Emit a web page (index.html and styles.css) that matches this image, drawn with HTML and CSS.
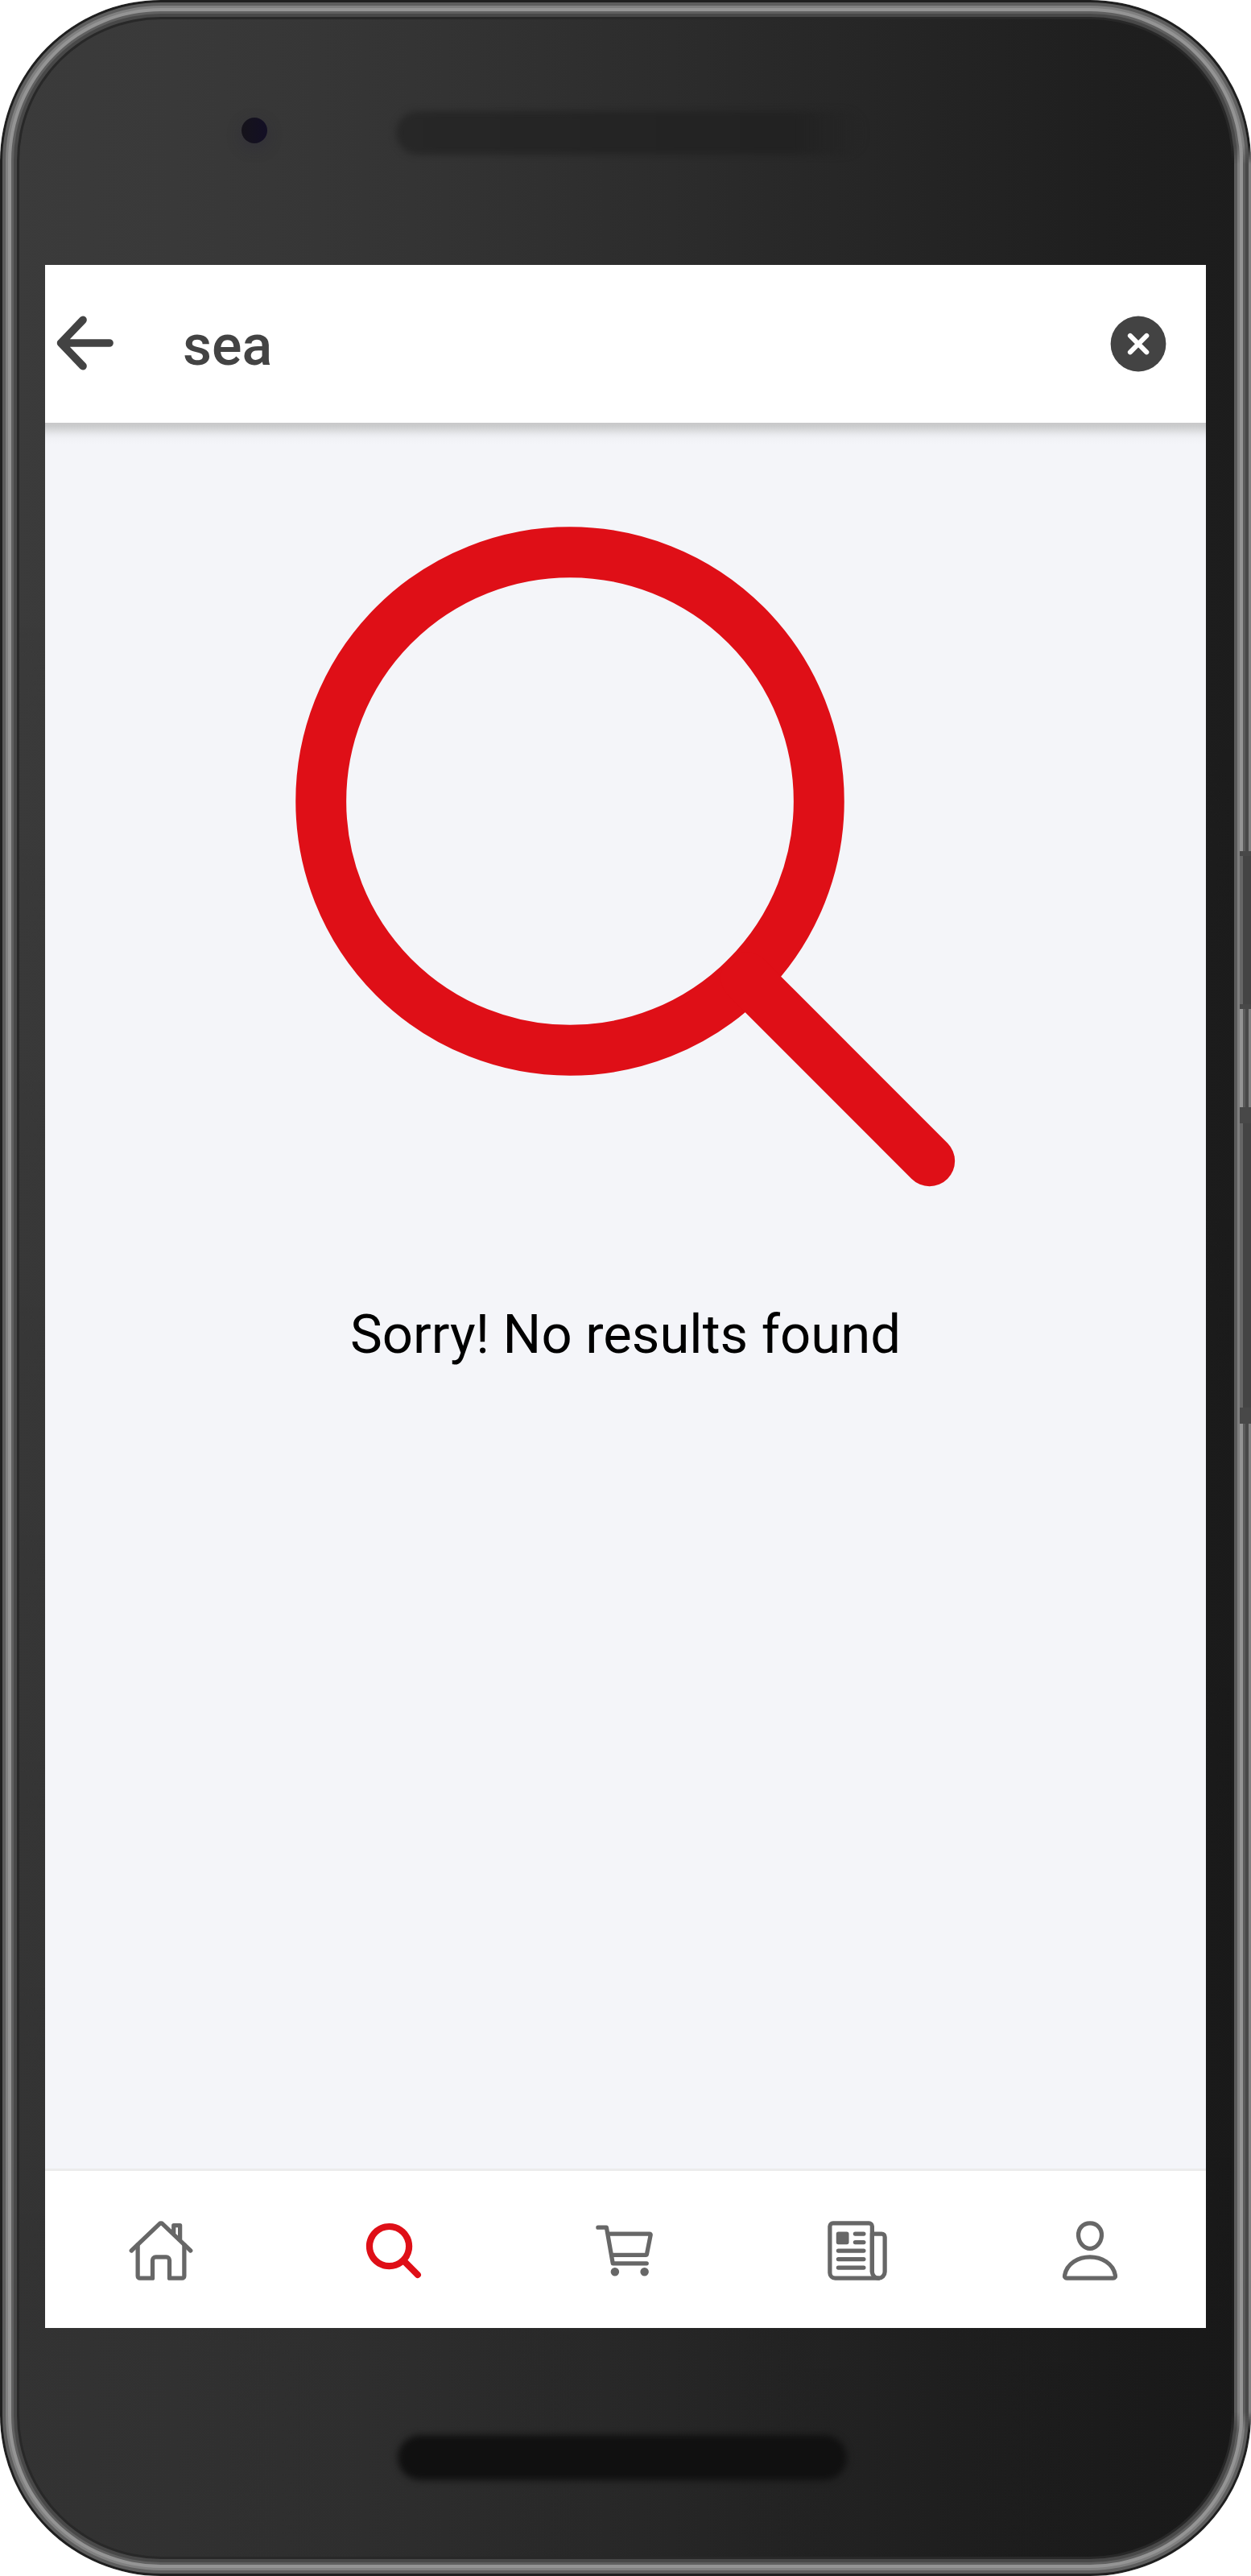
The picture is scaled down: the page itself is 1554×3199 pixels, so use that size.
FILE: index.html
```html
<!DOCTYPE html>
<html lang="en">
<head>
<meta charset="utf-8">
<title>Search</title>
<link rel="stylesheet" href="styles.css">
</head>
<body>
<div class="phone">
  <div class="bezel-top">
    <span class="camera"></span>
    <span class="speaker"></span>
  </div>
  <main class="screen">
    <header class="search-bar">
      <svg class="back" viewBox="0 0 72 68"><path d="M33 5.3 5.6 34 33 62.700M5.600 34H66"/></svg>
      <span class="query">sea</span>
      <svg class="clear" viewBox="0 0 70 70"><circle cx="35" cy="35" r="34.400"/><path d="M24.900 24.900 45.300 45.300M45.300 24.900 24.900 45.300"/></svg>
    </header>
    <section class="results">
      <svg class="empty-icon" viewBox="0 0 820 820"><circle cx="341" cy="341" r="309.300"/><path d="M559.700 559.700 787.700 787.700"/></svg>
      <p class="empty-text">Sorry! No results found</p>
    </section>
    <nav class="tabs">
      <a class="tab"><svg viewBox="0 0 512 512"><path d="M80 212v236a16 16 0 0016 16h96V328a24 24 0 0124-24h80a24 24 0 0124 24v136h96a16 16 0 0016-16V212"/><path d="M480 256L266.890 52c-5-5.280-16.690-5.340-21.780 0L32 256M400 179V64h-48v69"/></svg></a>
      <a class="tab active"><svg viewBox="0 0 512 512"><path d="M456.690 421.390L362.600 327.300a173.810 173.810 0 0034.840-104.580C397.440 126.380 319.060 48 222.720 48S48 126.380 48 222.720s78.380 174.720 174.720 174.720A173.810 173.810 0 00327.300 362.600l94.090 94.090a25 25 0 0035.300-35.300zM97.920 222.720a124.800 124.800 0 11124.800 124.800 124.950 124.950 0 01-124.800-124.800z"/></svg></a>
      <a class="tab"><svg viewBox="0 0 512 512"><circle class="solid" cx="176" cy="416" r="16"/><circle class="solid" cx="400" cy="416" r="16"/><path d="M48 80h64l48 272h256"/><path d="M160 288h249.440a8 8 0 007.850-6.430l28.800-144a8 8 0 00-7.850-9.570H128"/></svg></a>
      <a class="tab"><svg viewBox="0 0 512 512"><path d="M368 415.860V72a24.070 24.070 0 00-24-24H72a24.070 24.070 0 00-24 24v352a40.120 40.120 0 0040 40h328"/><path d="M416 464a48 48 0 01-48-48V128h72a24 24 0 0124 24v264a48 48 0 01-48 48z"/><path d="M240 128h64M240 192h64M112 256h192M112 320h192M112 384h192"/><path class="block" d="M176 208h-64a16 16 0 01-16-16v-64a16 16 0 0116-16h64a16 16 0 0116 16v64a16 16 0 01-16 16z"/></svg></a>
      <a class="tab"><svg viewBox="0 0 512 512"><path d="M344 144c-3.920 52.870-44 96-88 96s-84.150-43.120-88-96c-4-55 35-96 88-96s92 42 88 96z"/><path d="M256 304c-87 0-175.300 48-191.640 138.600C62.390 453.520 68.570 464 80 464h352c11.440 0 17.620-10.480 15.650-21.400C431.300 352 343 304 256 304z"/></svg></a>
    </nav>
  </main>
  <div class="bezel-bottom"><span class="speaker"></span></div>
  <span class="rail"></span>
  <span class="side-button power"></span>
  <span class="side-button volume"></span>
</div>
</body>
</html>
```
FILE: styles.css
```css
* { box-sizing: border-box; }

body {
  margin: 0;
  background: #fff;
  font-family: Roboto, sans-serif;
}

.phone {
  position: relative;
  width: 1554px;
  height: 3199px;
  padding: 0 56px;
  overflow: hidden;
  display: flex;
  flex-direction: column;
  border-radius: 200px;
  background:
    linear-gradient(to bottom, rgba(0, 0, 0, 0) 20%, rgba(0, 0, 0, .14) 92%),
    linear-gradient(to right, #3b3b3b 0, #393939 14%, #343434 33%, #282828 64%, #1f1f1f 88%, #1c1c1c 100%);
  box-shadow:
    inset 0 0 0 3px #1f1f1f,
    inset 0 0 0 7px #5d5d5d,
    inset 0 0 0 10px #808080,
    inset 0 0 0 14px #949494,
    inset 0 0 0 17px #606060,
    inset 0 0 0 21px #484848,
    inset 0 0 0 24px #282828;
}

.bezel-top {
  flex: none;
  height: 329px;
  display: flex;
  align-items: flex-start;
}

.camera {
  width: 32px;
  height: 32px;
  margin: 146px 0 0 244px;
  border-radius: 50%;
  background: linear-gradient(to right, #15131a, #130f25);
  box-shadow: 0 6px 18px rgba(40, 38, 60, .35);
}

.bezel-top .speaker {
  width: 584px;
  height: 54px;
  margin: 138px 0 0 160px;
  border-radius: 27px;
  background: linear-gradient(to right, #272727, #242424 50%, #222 85%, rgba(34, 34, 34, 0));
  filter: blur(4px);
}

.screen {
  flex: none;
  height: 2562px;
  display: flex;
  flex-direction: column;
  background: #f4f5f9;
}

.search-bar {
  flex: none;
  height: 196px;
  padding: 0 49px 0 14px;
  display: flex;
  align-items: center;
  background: #fff;
}

.back {
  width: 72px;
  height: 68px;
  margin-top: -3px;
  fill: none;
  stroke: #434343;
  stroke-width: 9.7;
  stroke-linecap: round;
  stroke-linejoin: round;
}

.query {
  flex: 1;
  margin: 3px 0 0 85px;
  font-size: 70px;
  font-weight: 500;
  line-height: 82px;
  color: #434343;
}

.clear { width: 70px; height: 70px; }
.clear circle { fill: #434343; }
.clear path { stroke: #fff; stroke-width: 6; stroke-linecap: round; }

.results {
  flex: 1;
  display: flex;
  flex-direction: column;
  align-items: center;
  padding-top: 129px;
  background: linear-gradient(to bottom, #c8c8c9 0, #cbcccd 4px, #dcdddf 10px, #eaebef 15px, #f1f2f6 20px, #f4f5f9 26px);
}

.empty-icon {
  width: 820px;
  height: 820px;
  fill: none;
  stroke: #df0f17;
  stroke-width: 62.9;
  stroke-linecap: round;
}

.empty-text {
  margin: 143px 0 0;
  font-size: 67px;
  line-height: 80px;
  color: #000;
}

.tabs {
  flex: none;
  height: 198px;
  padding-top: 57px;
  display: flex;
  border-top: 3px solid #ececec;
  background: #fff;
}

.tab { flex: 1; display: flex; justify-content: center; }

.tab svg {
  width: 84px;
  height: 84px;
  fill: none;
  stroke: #676767;
  stroke-width: 32;
  stroke-linecap: round;
  stroke-linejoin: round;
}

.tab .solid { fill: #676767; }
.tab .block { fill: #676767; stroke: none; }
.tab.active svg { fill: #df0f17; stroke: none; }

.bezel-bottom {
  flex: 1;
  display: flex;
  justify-content: center;
  align-items: flex-start;
}

.bezel-bottom .speaker {
  width: 558px;
  height: 56px;
  margin: 133px 8px 0 0;
  border-radius: 28px;
  background: #101010;
  filter: blur(4px);
}

.rail {
  position: absolute;
  top: 180px;
  bottom: 180px;
  right: 0;
  width: 24px;
  background: linear-gradient(to right, #1c1c1c 3px, #5c5c5c 3px 7px, #808080 7px 10px, #949494 10px 14px, #5a5a5a 14px 17px, #484848 17px 21px, #808080 21px);
  mask-image: linear-gradient(to bottom, transparent, #000 24px, #000 calc(100% - 24px), transparent);
}

.side-button {
  position: absolute;
  right: 0;
  width: 14px;
  background: linear-gradient(to right, #666 4px, #444 4px);
  border: solid #484848;
  border-width: 6px 0;
}

.power { top: 1057px; height: 196px; }
.volume { top: 1375px; height: 393px; border-width: 20px 0; }
```
